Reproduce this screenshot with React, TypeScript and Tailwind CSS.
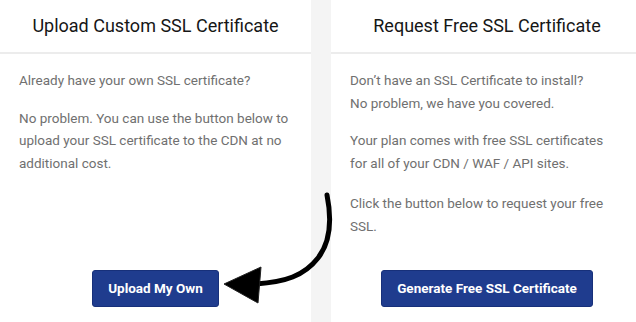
export default function App() {
  return (
    <div className="relative w-[636px] h-[322px] overflow-hidden bg-[#f4f4f4] font-['Roboto',sans-serif]">
      <div className="flex w-[643px] h-full gap-[20px]">
        <section className="flex w-[311px] flex-col bg-white">
          <header className="flex h-[54px] items-center justify-center border-b-2 border-[#ececec] pb-[2px] text-[18px] text-[#161616]">
            Upload Custom SSL Certificate
          </header>
          <div className="flex-1 px-[19px] pt-[15px] text-[13.5px] leading-[22.5px] text-[#707070]">
            <p className="mb-[15px]">Already have your own SSL certificate?</p>
            <p>
              No problem. You can use the button below to upload your SSL
              certificate to the CDN at no additional cost.
            </p>
          </div>
          <div className="flex justify-center pb-[15px]">
            <button className="h-[37px] rounded-[3px] border border-[#17307a] bg-[#1f3c8e] px-[15px] text-[13.5px] font-bold text-white">
              Upload My Own
            </button>
          </div>
        </section>

        <section className="flex flex-1 flex-col bg-white">
          <header className="flex h-[54px] items-center justify-center border-b-2 border-[#ececec] pb-[2px] text-[18px] text-[#161616]">
            Request Free SSL Certificate
          </header>
          <div className="flex-1 pl-[19px] pr-[24px] pt-[15px] text-[13.5px] leading-[22.5px] text-[#707070]">
            <p className="mb-[15px]">
              Don’t have an SSL Certificate to install?
              <br />
              No problem, we have you covered.
            </p>
            <p className="mb-[18px]">
              Your plan comes with free SSL certificates for all of your CDN /
              WAF / API sites.
            </p>
            <p>Click the button below to request your free SSL.</p>
          </div>
          <div className="flex justify-center pb-[15px]">
            <button className="h-[37px] rounded-[3px] border border-[#17307a] bg-[#1f3c8e] px-[15px] text-[13.5px] font-bold text-white">
              Generate Free SSL Certificate
            </button>
          </div>
        </section>
      </div>

      {/* hand-drawn arrow pointing at the upload button */}
      <svg
        className="pointer-events-none absolute left-0 top-0"
        width="636"
        height="322"
        viewBox="0 0 636 322"
      >
        <path
          d="M327 195 C331 215 332 240 318 258 C304 276 285 282 256 284"
          fill="none"
          stroke="#000"
          strokeWidth="5"
          strokeLinecap="round"
        />
        <path d="M224 284 L261 267 L258 303 Z" fill="#000" stroke="#222" strokeWidth="1" strokeLinejoin="round" />
      </svg>
    </div>
  )
}
